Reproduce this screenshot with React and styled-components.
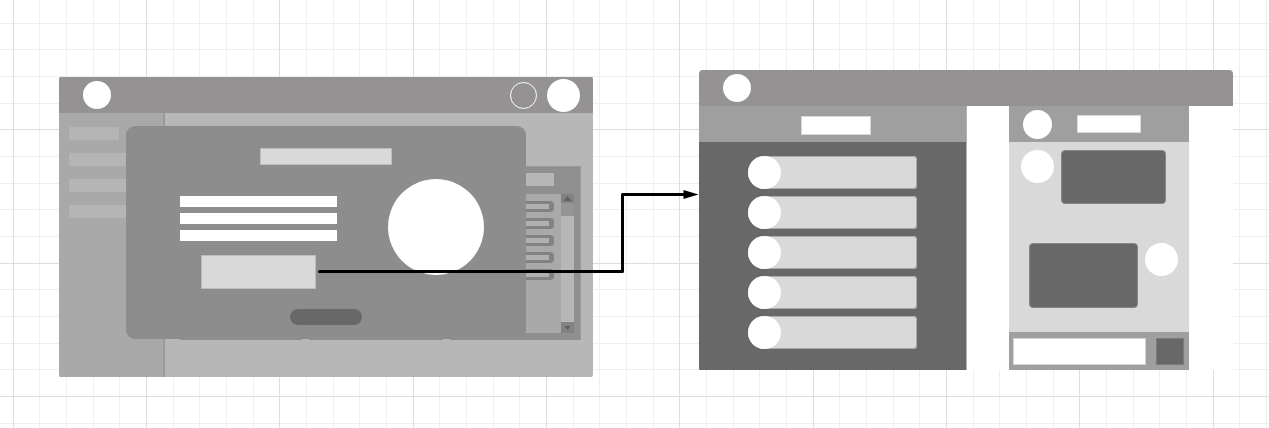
import React from "react";
import styled, { createGlobalStyle } from "styled-components";

const GlobalStyle = createGlobalStyle`
  *, *::before, *::after { box-sizing: border-box; }
  body { margin: 0; background: #fff; font-family: "Liberation Sans", sans-serif; }
  button, input { display: block; margin: 0; padding: 0; border: 0; font: inherit; }
`;

const Canvas = styled.main`
  position: relative;
  min-height: 100vh;
  overflow: hidden;
`;

const GridSvg = styled.svg`
  position: absolute;
  inset: 0;
  width: 100%;
  height: 100%;
`;

const Connector = styled.svg`
  position: absolute;
  left: 0;
  top: 0;
  overflow: visible;
  pointer-events: none;
`;

/* A wireframe window placed on the canvas */
const Frame = styled.section`
  position: absolute;
  left: ${(p) => p.$x}px;
  top: ${(p) => p.$y}px;
  width: 534px;
  height: 300px;
  display: flex;
  flex-direction: column;
  overflow: hidden;
  background: ${(p) => p.$bg};
  border-radius: ${(p) => p.$radius};
`;

const TopBar = styled.header`
  flex: none;
  height: 36px;
  display: flex;
  align-items: center;
  padding: 0 13px 0 24px;
  gap: 10px;
  background: #959293;
`;

const Circle = styled.span`
  flex: none;
  width: ${(p) => p.$size}px;
  height: ${(p) => p.$size}px;
  border-radius: 50%;
  background: ${(p) => (p.$outline ? "transparent" : "#fff")};
  border: ${(p) => (p.$outline ? "1px solid #fff" : "0")};
`;

const Spacer = styled.span`
  flex: 1;
`;

const Block = styled.span`
  flex: none;
  display: block;
  width: ${(p) => p.$w}px;
  height: ${(p) => p.$h}px;
  background: ${(p) => p.$color || "#fff"};
  border: 1px solid ${(p) => p.$edge || p.$color || "#fff"};
`;

const Columns = styled.div`
  flex: 1;
  min-height: 0;
  display: flex;
`;

/* Dashboard window */
const Sidebar = styled.nav`
  flex: none;
  width: 106px;
  display: flex;
  flex-direction: column;
  gap: 13px;
  padding: 14px 10px;
  background: #a9a9a9;
  border-right: 2px solid #9a9a9a;
`;

const Cards = styled.div`
  flex: 1;
  display: grid;
  grid-template-columns: 122px 134px 131px;
  gap: 7px;
  padding: 53px 12px 37px 15px;
`;

const Card = styled.article`
  display: flex;
  flex-direction: column;
  gap: 8px;
  padding: 6px;
  background: #8f8f8f;
  border: 1px solid #999;
  border-bottom-color: #8f8f8f;
`;

const CardTitle = styled.span`
  width: 97px;
  height: 13px;
  margin-left: 0;
  background: #b7b7b7;
`;

const List = styled.div`
  flex: 1;
  min-height: 0;
  display: flex;
  justify-content: space-between;
  background: #a9a9a9;
`;

const ListRows = styled.div`
  flex: none;
  width: 97px;
  display: flex;
  flex-direction: column;
  gap: 6px;
  padding-top: 7px;
`;

const ListRow = styled.span`
  height: 11px;
  padding: 3px 5px;
  background: #828282;
  border-radius: 4px;

  &::before {
    content: "";
    display: block;
    height: 5px;
    background: #b0b0b0;
  }
`;

const Scrollbar = styled.div`
  flex: none;
  width: 13px;
  display: flex;
  flex-direction: column;
  background: #b7b7b7;
`;

const ScrollButton = styled.button`
  height: ${(p) => p.$h}px;
  background: #828282;

  svg { display: block; margin: 0 auto; }
`;

const Thumb = styled.span`
  height: 13px;
  margin-bottom: auto;
  background: #959595;
`;

const Dialog = styled.div`
  position: absolute;
  left: 67px;
  top: 49px;
  width: 400px;
  display: flex;
  flex-direction: column;
  align-items: center;
  padding: 22px 42px 14px 54px;
  background: #8d8d8d;
  border-radius: 9px;
`;

const DialogTitle = styled.div`
  align-self: stretch;
  display: flex;
  justify-content: center;
  margin-right: 12px;
`;

const DialogBody = styled.div`
  align-self: stretch;
  display: flex;
  justify-content: space-between;
  padding: 14px 0 0;
`;

const Copy = styled.div`
  display: flex;
  flex-direction: column;
  gap: 6px;
  padding-top: 17px;
`;

const MainButton = styled.button`
  align-self: center;
  width: 115px;
  height: 34px;
  margin-top: 8px;
  background: #d9d9d9;
  box-shadow: inset 0 0 0 1px #bcbcbc;
`;

const Pill = styled.button`
  width: 72px;
  height: 16px;
  margin: 20px 12px 0 0;
  border-radius: 8px;
  background: #686868;
`;

/* Chat window */
const Contacts = styled.div`
  flex: none;
  width: 268px;
  display: flex;
  flex-direction: column;
  background: #686868;
  border-right: 1px solid #b4b4b4;
`;

const PaneHeader = styled.div`
  flex: none;
  height: 36px;
  display: flex;
  align-items: center;
  justify-content: ${(p) => (p.$center ? "center" : "flex-start")};
  gap: 25px;
  padding: ${(p) => (p.$center ? "2px 0 0 6px" : "0 14px")};
  background: #9f9f9f;
`;

const ContactList = styled.div`
  display: flex;
  flex-direction: column;
  gap: 7px;
  padding: 14px 49px;
`;

const Contact = styled.button`
  width: 169px;
  height: 33px;
  background: #d9d9d9;
  border-radius: 17px 4px 4px 17px;
  box-shadow: inset 0 0 0 1px #ababab;

  span { display: block; }
`;

const Chat = styled.div`
  flex: none;
  width: 180px;
  margin-left: 42px;
  display: flex;
  flex-direction: column;
  background: #d9d9d9;
`;

const Messages = styled.div`
  flex: 1;
  display: flex;
  flex-direction: column;
  gap: 39px;
  padding: 8px 11px 0 12px;
`;

const Message = styled.div`
  display: flex;
  align-items: flex-start;
  justify-content: ${(p) => (p.$own ? "flex-end" : "flex-start")};
  gap: 7px;
`;

const Bubble = styled.span`
  width: ${(p) => p.$w}px;
  height: ${(p) => p.$h}px;
  background: #686868;
  border: 1px solid #868686;
  border-radius: 4px;
`;

const Composer = styled.form`
  flex: none;
  height: 38px;
  display: flex;
  align-items: center;
  justify-content: space-between;
  padding: 0 5px 0 4px;
  background: #9f9f9f;
`;

const MessageInput = styled.input`
  width: 133px;
  height: 27px;
  background: #fff;
  box-shadow: inset 0 0 0 1px #d4d4d4;
`;

const SendButton = styled.button`
  width: 28px;
  height: 27px;
  background: #686868;
  box-shadow: inset 0 0 0 1px #7c7c7c;
`;

const GRID_STEPS = Array.from({ length: 15 }, (_, i) => ({
  at: Math.floor((i * 80) / 3),
  vMajor: i % 5 === 0,
  hMajor: i % 5 === 4,
}));
const MINOR = "#efefef";
const MAJOR = "#dedede";

function CanvasGrid() {
  const rank = (key) => [...GRID_STEPS].sort((a, b) => a[key] - b[key]);
  return (
    <GridSvg aria-hidden="true">
      <defs>
        <pattern id="grid" x="13" y="23" width="400" height="400" patternUnits="userSpaceOnUse">
          {rank("vMajor").filter((s) => !s.vMajor).map((s) => (
            <rect key={"v" + s.at} x={s.at} y="0" width="1" height="400" fill={MINOR} />
          ))}
          {rank("hMajor").filter((s) => !s.hMajor).map((s) => (
            <rect key={"h" + s.at} x="0" y={s.at} width="400" height="1" fill={MINOR} />
          ))}
          {GRID_STEPS.filter((s) => s.vMajor).map((s) => (
            <rect key={"V" + s.at} x={s.at} y="0" width="1" height="400" fill={MAJOR} />
          ))}
          {GRID_STEPS.filter((s) => s.hMajor).map((s) => (
            <rect key={"H" + s.at} x="0" y={s.at} width="400" height="1" fill={MAJOR} />
          ))}
        </pattern>
      </defs>
      <rect width="100%" height="100%" fill="url(#grid)" />
    </GridSvg>
  );
}

function ListCard() {
  return (
    <Card>
      <CardTitle />
      <List>
        <ListRows>
          {[1, 2, 3, 4, 5].map((n) => <ListRow key={n} />)}
        </ListRows>
        <Scrollbar>
          <ScrollButton $h={9} type="button" aria-label="Scroll up">
            <svg width="9" height="5" viewBox="0 0 9 5"><path d="M4.5 0L8.5 5H0.5Z" fill="#5e5e5e" /></svg>
          </ScrollButton>
          <Thumb />
          <ScrollButton $h={11} type="button" aria-label="Scroll down">
            <svg width="7" height="4" viewBox="0 0 7 4"><path d="M3.5 4L0.5 0H6.5Z" fill="#5e5e5e" /></svg>
          </ScrollButton>
        </Scrollbar>
      </List>
    </Card>
  );
}

function DashboardFrame() {
  return (
    <Frame $x={59} $y={77} $bg="#b7b7b7" $radius="2px">
      <TopBar>
        <Circle $size={28} />
        <Spacer />
        <Circle $size={27} $outline />
        <Circle $size={33} />
      </TopBar>
      <Columns>
        <Sidebar>
          {[50, 84, 84, 84].map((w, i) => <Block key={i} $w={w} $h={13} $color="#b5b5b5" />)}
        </Sidebar>
        <Cards>
          <ListCard />
          <ListCard />
          <ListCard />
        </Cards>
      </Columns>
      <Dialog role="dialog">
        <DialogTitle>
          <Block $w={132} $h={17} $color="#d9d9d9" $edge="#bcbcbc" />
        </DialogTitle>
        <DialogBody>
          <Copy>
            <Block $w={157} $h={11} />
            <Block $w={157} $h={11} />
            <Block $w={157} $h={11} />
            <MainButton type="button" aria-label="Open" />
          </Copy>
          <Circle $size={96} />
        </DialogBody>
        <Pill type="button" aria-label="Close" />
      </Dialog>
    </Frame>
  );
}

function ChatFrame() {
  return (
    <Frame $x={699} $y={70} $bg="#fff" $radius="4px 4px 1px 1px">
      <TopBar>
        <Circle $size={28} />
      </TopBar>
      <Columns>
        <Contacts>
          <PaneHeader $center>
            <Block $w={70} $h={19} $edge="#d9d9d9" />
          </PaneHeader>
          <ContactList>
            {[1, 2, 3, 4, 5].map((n) => (
              <Contact key={n} type="button" aria-label={"Contact " + n}>
                <Circle $size={33} />
              </Contact>
            ))}
          </ContactList>
        </Contacts>
        <Chat>
          <PaneHeader>
            <Circle $size={29} />
            <Block $w={64} $h={18} $edge="#d9d9d9" />
          </PaneHeader>
          <Messages>
            <Message>
              <Circle $size={33} />
              <Bubble $w={105} $h={54} />
            </Message>
            <Message $own>
              <Bubble $w={109} $h={65} />
              <Circle $size={33} />
            </Message>
          </Messages>
          <Composer onSubmit={(e) => e.preventDefault()}>
            <MessageInput type="text" aria-label="Message" />
            <SendButton type="submit" aria-label="Send" />
          </Composer>
        </Chat>
      </Columns>
    </Frame>
  );
}

export default function App() {
  return (
    <>
      <GlobalStyle />
      <Canvas>
        <CanvasGrid />
        <DashboardFrame />
        <ChatFrame />
        <Connector width="700" height="280" aria-hidden="true">
          <path
            d="M319.5 271.5H622.5V194.5H685"
            fill="none"
            stroke="#000"
            strokeWidth="3"
            strokeLinecap="round"
            strokeLinejoin="round"
          />
          <path d="M683.5 190L698.5 194.5L683.5 199Z" />
        </Connector>
      </Canvas>
    </>
  );
}
